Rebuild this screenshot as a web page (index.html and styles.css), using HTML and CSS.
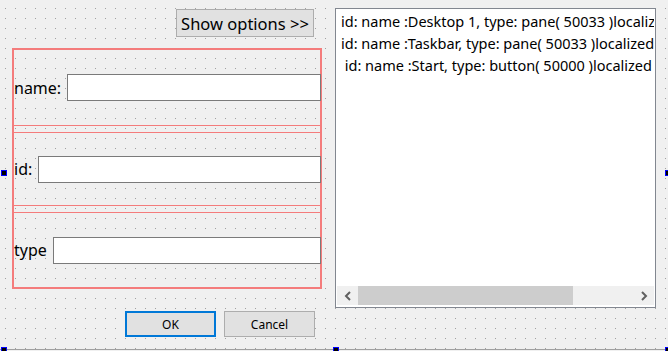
FILE: index.html
```html
<!DOCTYPE html>
<html lang="en">
<head>
    <meta charset="UTF-8">
    <meta name="viewport" content="width=device-width, initial-scale=1.0">
    <title>Element Finder</title>
    <link rel="stylesheet" href="styles.css">
</head>
<body>
    <div class="form">
        <div class="main">
            <div class="left">
                <div class="top-row">
                    <button class="btn btn-options">Show options &gt;&gt;</button>
                </div>

                <div class="groups">
                    <div class="group group-name">
                        <label class="field-label">name:</label>
                        <input class="field" type="text">
                    </div>
                    <div class="group group-id">
                        <label class="field-label">id:</label>
                        <input class="field" type="text">
                    </div>
                    <div class="group group-type">
                        <label class="field-label">type</label>
                        <input class="field" type="text">
                    </div>
                </div>

                <div class="actions">
                    <button class="btn btn-ok">OK</button>
                    <button class="btn btn-cancel">Cancel</button>
                </div>
            </div>

            <div class="list">
                <div class="list-body">
                    <div class="list-item">id: name :Desktop 1, type: pane( 50033 )localized type</div>
                    <div class="list-item">id: name :Taskbar, type: pane( 50033 )localized type</div>
                    <div class="list-item">&nbsp;id: name :Start, type: button( 50000 )localized type</div>
                </div>
                <div class="hscroll">
                    <span class="arrow">
                        <svg width="8" height="10" viewBox="0 0 8 10"><polyline points="6,1 2,5 6,9" fill="none" stroke="#606060" stroke-width="2"/></svg>
                    </span>
                    <div class="track">
                        <div class="thumb"></div>
                    </div>
                    <span class="arrow">
                        <svg width="8" height="10" viewBox="0 0 8 10"><polyline points="2,1 6,5 2,9" fill="none" stroke="#606060" stroke-width="2"/></svg>
                    </span>
                </div>
            </div>
        </div>

        <!-- designer selection frame -->
        <div class="form-edge"></div>
        <span class="handle handle-ml"></span>
        <span class="handle handle-mr"></span>
        <span class="handle handle-bl"></span>
        <span class="handle handle-bm"></span>
        <span class="handle handle-br"></span>
    </div>
</body>
</html>
```

FILE: styles.css
```css
body, html {
    margin: 0;
    padding: 0;
    height: 100%;
    overflow: hidden;
    font-family: 'Noto Sans', 'Open Sans', sans-serif;
    color: #000;
}

.form {
    position: relative;
    height: 351px;
    background-color: #f0f0f0;
    background-image:
        linear-gradient(to bottom, transparent 1px, #f0f0f0 1px),
        linear-gradient(to right, #a0a0a0 1px, transparent 1px);
    background-size: 10px 10px;
    background-position: 5px 8px;
}

.main {
    display: flex;
    align-items: flex-start;
    gap: 13px;
    padding: 8px 0 0 12px;
}

.left {
    width: 310px;
    display: flex;
    flex-direction: column;
}

.top-row {
    display: flex;
    justify-content: flex-end;
    padding: 1px 8px 0 0;
}

.btn {
    font-family: inherit;
    background: #e1e1e1;
    border: 1px solid #adadad;
    padding: 0;
    color: #000;
    cursor: pointer;
}

.btn-options {
    width: 138px;
    height: 28px;
    font-size: 16.5px;
}

.groups {
    margin-top: 11px;
    border: 2px solid #f47c7c;
    display: flex;
    flex-direction: column;
    gap: 6px;
}

.group {
    display: flex;
    align-items: center;
    gap: 6px;
    box-sizing: border-box;
}

.group-name {
    height: 76px;
    border-bottom: 1px solid #f47c7c;
}

.group-id {
    height: 74px;
    border-top: 1px solid #f47c7c;
    border-bottom: 1px solid #f47c7c;
}

.group-type {
    height: 75px;
    border-top: 1px solid #f47c7c;
}

.field-label {
    font-size: 16px;
    line-height: 20px;
}

.field {
    flex: 1;
    min-width: 0;
    height: 27px;
    box-sizing: border-box;
    border: 1px solid #7a7a7a;
    background: #fff;
    margin: 0 -1px 0 0;
    outline: none;
}

.actions {
    display: flex;
    justify-content: flex-end;
    gap: 8px;
    margin-top: 22px;
    padding-right: 7px;
}

.actions .btn {
    width: 91px;
    height: 26px;
    font-size: 12px;
}

.btn-ok {
    border: 2px solid #0078d7;
}

.list {
    width: 321px;
    height: 300px;
    box-sizing: border-box;
    border: 1px solid #828790;
    padding: 1px;
    background: #fff;
    display: flex;
    flex-direction: column;
}

.list-body {
    flex: 1;
    overflow: hidden;
    padding: 0 0 0 4px;
}

.list-item {
    white-space: nowrap;
    font-size: 14.5px;
    line-height: 22px;
}

.hscroll {
    display: flex;
    align-items: stretch;
    height: 19px;
    background: #f0f0f0;
    margin-bottom: 1px;
}

.arrow {
    width: 21px;
    display: flex;
    align-items: center;
    justify-content: center;
}

.track {
    flex: 1;
    display: flex;
}

.thumb {
    width: 215px;
    background: #cdcdcd;
}

.form-edge {
    position: absolute;
    left: 0;
    right: 0;
    top: 349px;
    height: 1px;
    background: #a0a0a0;
}

.handle {
    position: absolute;
    width: 4px;
    height: 4px;
    background: #000;
    border: 1px solid #0000ff;
}

.handle-ml { left: 1px; top: 170px; }
.handle-mr { left: 665px; top: 170px; }
.handle-bl { left: 1px; top: 347px; }
.handle-bm { left: 333px; top: 347px; }
.handle-br { left: 665px; top: 347px; }
```
